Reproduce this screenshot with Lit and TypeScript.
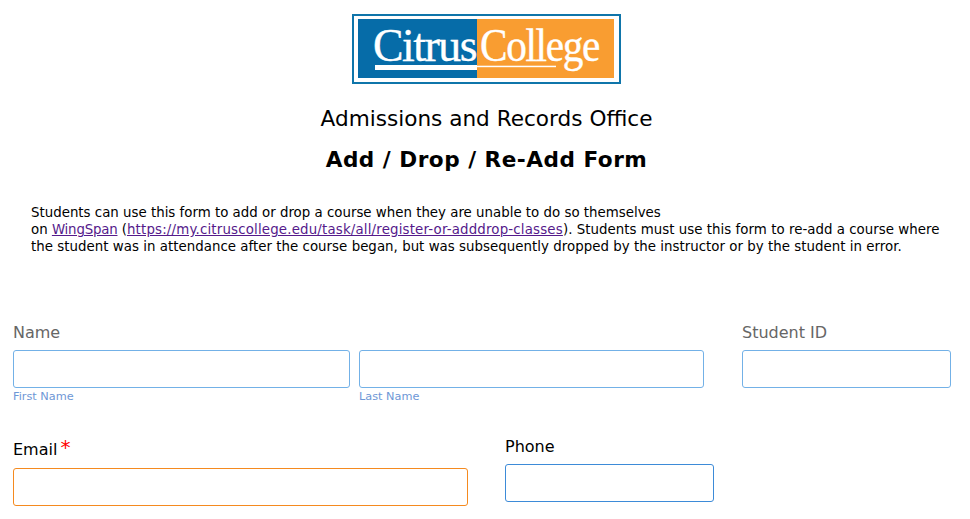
import { LitElement, html, css } from "lit";
import { customElement } from "lit/decorators.js";

@customElement("app-root")
export class AppRoot extends LitElement {
  static styles = css`
    :host { display: block; background: #fff; font-family: "DejaVu Sans", Verdana, sans-serif; color: #000; height: 519px; overflow: hidden; }
    .head { display: flex; flex-direction: column; align-items: center; padding: 14px 0 0 3px; }
    .logo { display: block; width: 269px; height: 70px; }
    .org { margin: 21px 0 0; font-size: 21.6px; line-height: 28px; font-weight: 400; }
    .title { margin: 13px 0 0; font-size: 21.6px; line-height: 28px; font-weight: 700; letter-spacing: 0.5px; }
    .intro { margin: 30px 0 0; padding: 0 20px 0 31px; font-size: 13.36px; line-height: 17px; }
    .intro a { color: #551a8b; }
    .intro .wing { letter-spacing: -0.2px; }
    .intro .url { letter-spacing: 0.17px; }
    .intro .rest { letter-spacing: 0.03px; }
    .intro .last { letter-spacing: 0.025px; }
    .row1 { display: grid; grid-template-columns: 337px 345px 238px; column-gap: 9px; padding: 68px 0 0 13px; }
    .row1 .id { margin-left: 29px; }
    .group-label { grid-column: 1 / 3; }
    .lab { font-size: 16px; line-height: 20px; color: #666; margin-bottom: 7px; display: block; }
    input { display: block; box-sizing: border-box; width: 100%; height: 38px; margin: 0; padding: 0 8px; border: 1px solid #73b1e7; border-radius: 3px; background: #fff; outline: none; font: inherit; }
    .sub { display: block; font-size: 11.3px; line-height: 14px; margin-top: 2px; color: #6e97d6; }
    .row2 { display: grid; grid-template-columns: 455px 209px; column-gap: 37px; align-items: end; padding: 33px 0 0 13px; }
    .em { color: #000; display: block; font-size: 16px; line-height: 22px; margin-bottom: 7px; }
    .em .star { color: #f00; font-size: 20px; line-height: 16px; vertical-align: 1px; margin-left: 3px; }
    .email-input { border-color: #f58a1f; }
    .ph { display: block; font-size: 16px; line-height: 20px; margin-bottom: 7px; }
    .phone-input { border-color: #3d8bd8; }
    .phone-wrap { margin-bottom: 4px; }
    .logo-text { font-family: "Liberation Serif", "Times New Roman", serif; font-size: 46px; fill: #fff; stroke: #fff; stroke-width: 0.4px; letter-spacing: -1.5px; }
  `;

  render() {
    return html`
      <header class="head">
        <svg class="logo" viewBox="0 0 269 70" role="img" aria-label="Citrus College">
          <rect width="269" height="70" fill="#0f75aa"></rect>
          <rect x="2" y="2" width="265" height="66" fill="#fff"></rect>
          <rect x="6" y="5" width="119" height="59" fill="#066ca8"></rect>
          <rect x="125" y="5" width="137" height="59" fill="#f99d31"></rect>
          <text class="logo-text" x="21" y="47" textLength="103" lengthAdjust="spacingAndGlyphs">Citrus</text>
          <text class="logo-text" x="128" y="47" textLength="119" lengthAdjust="spacingAndGlyphs">College</text>
          <rect x="23" y="51" width="102" height="5" fill="#fff"></rect>
          <rect x="125" y="51.7" width="79" height="1.5" fill="#fff"></rect>
        </svg>
        <h2 class="org">Admissions and Records Office</h2>
        <h1 class="title">Add / Drop / Re-Add Form</h1>
      </header>
      <p class="intro">
        Students can use this form to add or drop a course when they are unable to do so themselves<br />
        on <a class="wing" href="#">WingSpan</a> (<a class="url" href="#">https://my.citruscollege.edu/task/all/register-or-adddrop-classes</a><span class="rest">). Students must use this form to re-add a course where</span><br />
        <span class="last">the student was in attendance after the course began, but was subsequently dropped by the instructor or by the student in error.</span>
      </p>
      <div class="row1">
        <span class="lab group-label">Name</span>
        <span class="lab id">Student ID</span>
        <div><input aria-label="First Name" /><span class="sub">First Name</span></div>
        <div><input aria-label="Last Name" /><span class="sub">Last Name</span></div>
        <div class="id"><input aria-label="Student ID" /></div>
      </div>
      <div class="row2">
        <div>
          <span class="em">Email<span class="star">*</span></span>
          <input class="email-input" aria-label="Email" />
        </div>
        <div class="phone-wrap">
          <span class="ph">Phone</span>
          <input class="phone-input" aria-label="Phone" />
        </div>
      </div>
    `;
  }
}
